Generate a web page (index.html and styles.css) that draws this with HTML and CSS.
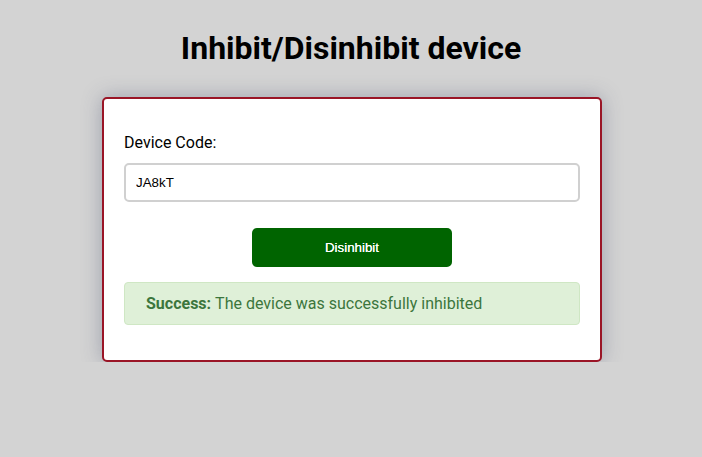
FILE: index.html
```html
<!DOCTYPE html>
<html>
<head>
<meta charset="utf-8">
<link rel="stylesheet" href="styles.css">
</head>
<body>
<h1 class="title">Inhibit/Disinhibit device</h1>
<div class="card">
  <label class="label" for="code">Device Code:</label>
  <input class="input" id="code" type="text" value="JA8kT">
  <div class="actions">
    <button class="btn" type="button">Disinhibit</button>
  </div>
  <div class="alert"><strong>Success:</strong> The device was successfully inhibited</div>
</div>
</body>
</html>
```
FILE: styles.css
```css
html, body {
  background: #d3d3d3;
}
body {
  margin: 8px;
  font-family: Roboto, "Liberation Sans", sans-serif;
  color: #000;
}
.title {
  font-size: 32px;
  font-weight: 700;
  text-align: center;
  margin: 21px 0 0;
  line-height: 38px;
}
.card {
  box-sizing: border-box;
  width: 500px;
  margin: 30px 0 0 calc(50% - 249px);
  background: #fff;
  border: 2px solid #9a1526;
  border-radius: 5px;
  padding: 34px 20px 35px;
  box-shadow: 0 0 20px rgba(70, 80, 110, 0.38);
  display: flex;
  flex-direction: column;
}
.label {
  font-size: 16px;
  line-height: 19px;
  display: block;
}
.input {
  box-sizing: border-box;
  margin-top: 11px;
  width: 100%;
  height: 39px;
  border: 2px solid #d0d0d0;
  border-radius: 5px;
  padding: 0 10px;
  font-family: "Liberation Sans", Arial, sans-serif;
  font-size: 13.33px;
  color: #000;
  outline: none;
}
.actions {
  display: flex;
  justify-content: center;
  margin-top: 26px;
}
.btn {
  width: 200px;
  height: 39px;
  background: #006400;
  color: #fff;
  border: none;
  border-radius: 5px;
  font-family: "Liberation Sans", Arial, sans-serif;
  font-size: 13.33px;
  text-shadow: 0 0 0.4px #fff;
}
.alert {
  box-sizing: border-box;
  margin-top: 15px;
  height: 43px;
  display: flex;
  align-items: center;
  background: #dff0d8;
  border: 1px solid #cfe7c4;
  border-radius: 4px;
  padding: 0 21px;
  color: #3c763d;
  font-size: 16px;
}
.alert strong {
  font-weight: 700;
  margin-right: 4px;
}
```
